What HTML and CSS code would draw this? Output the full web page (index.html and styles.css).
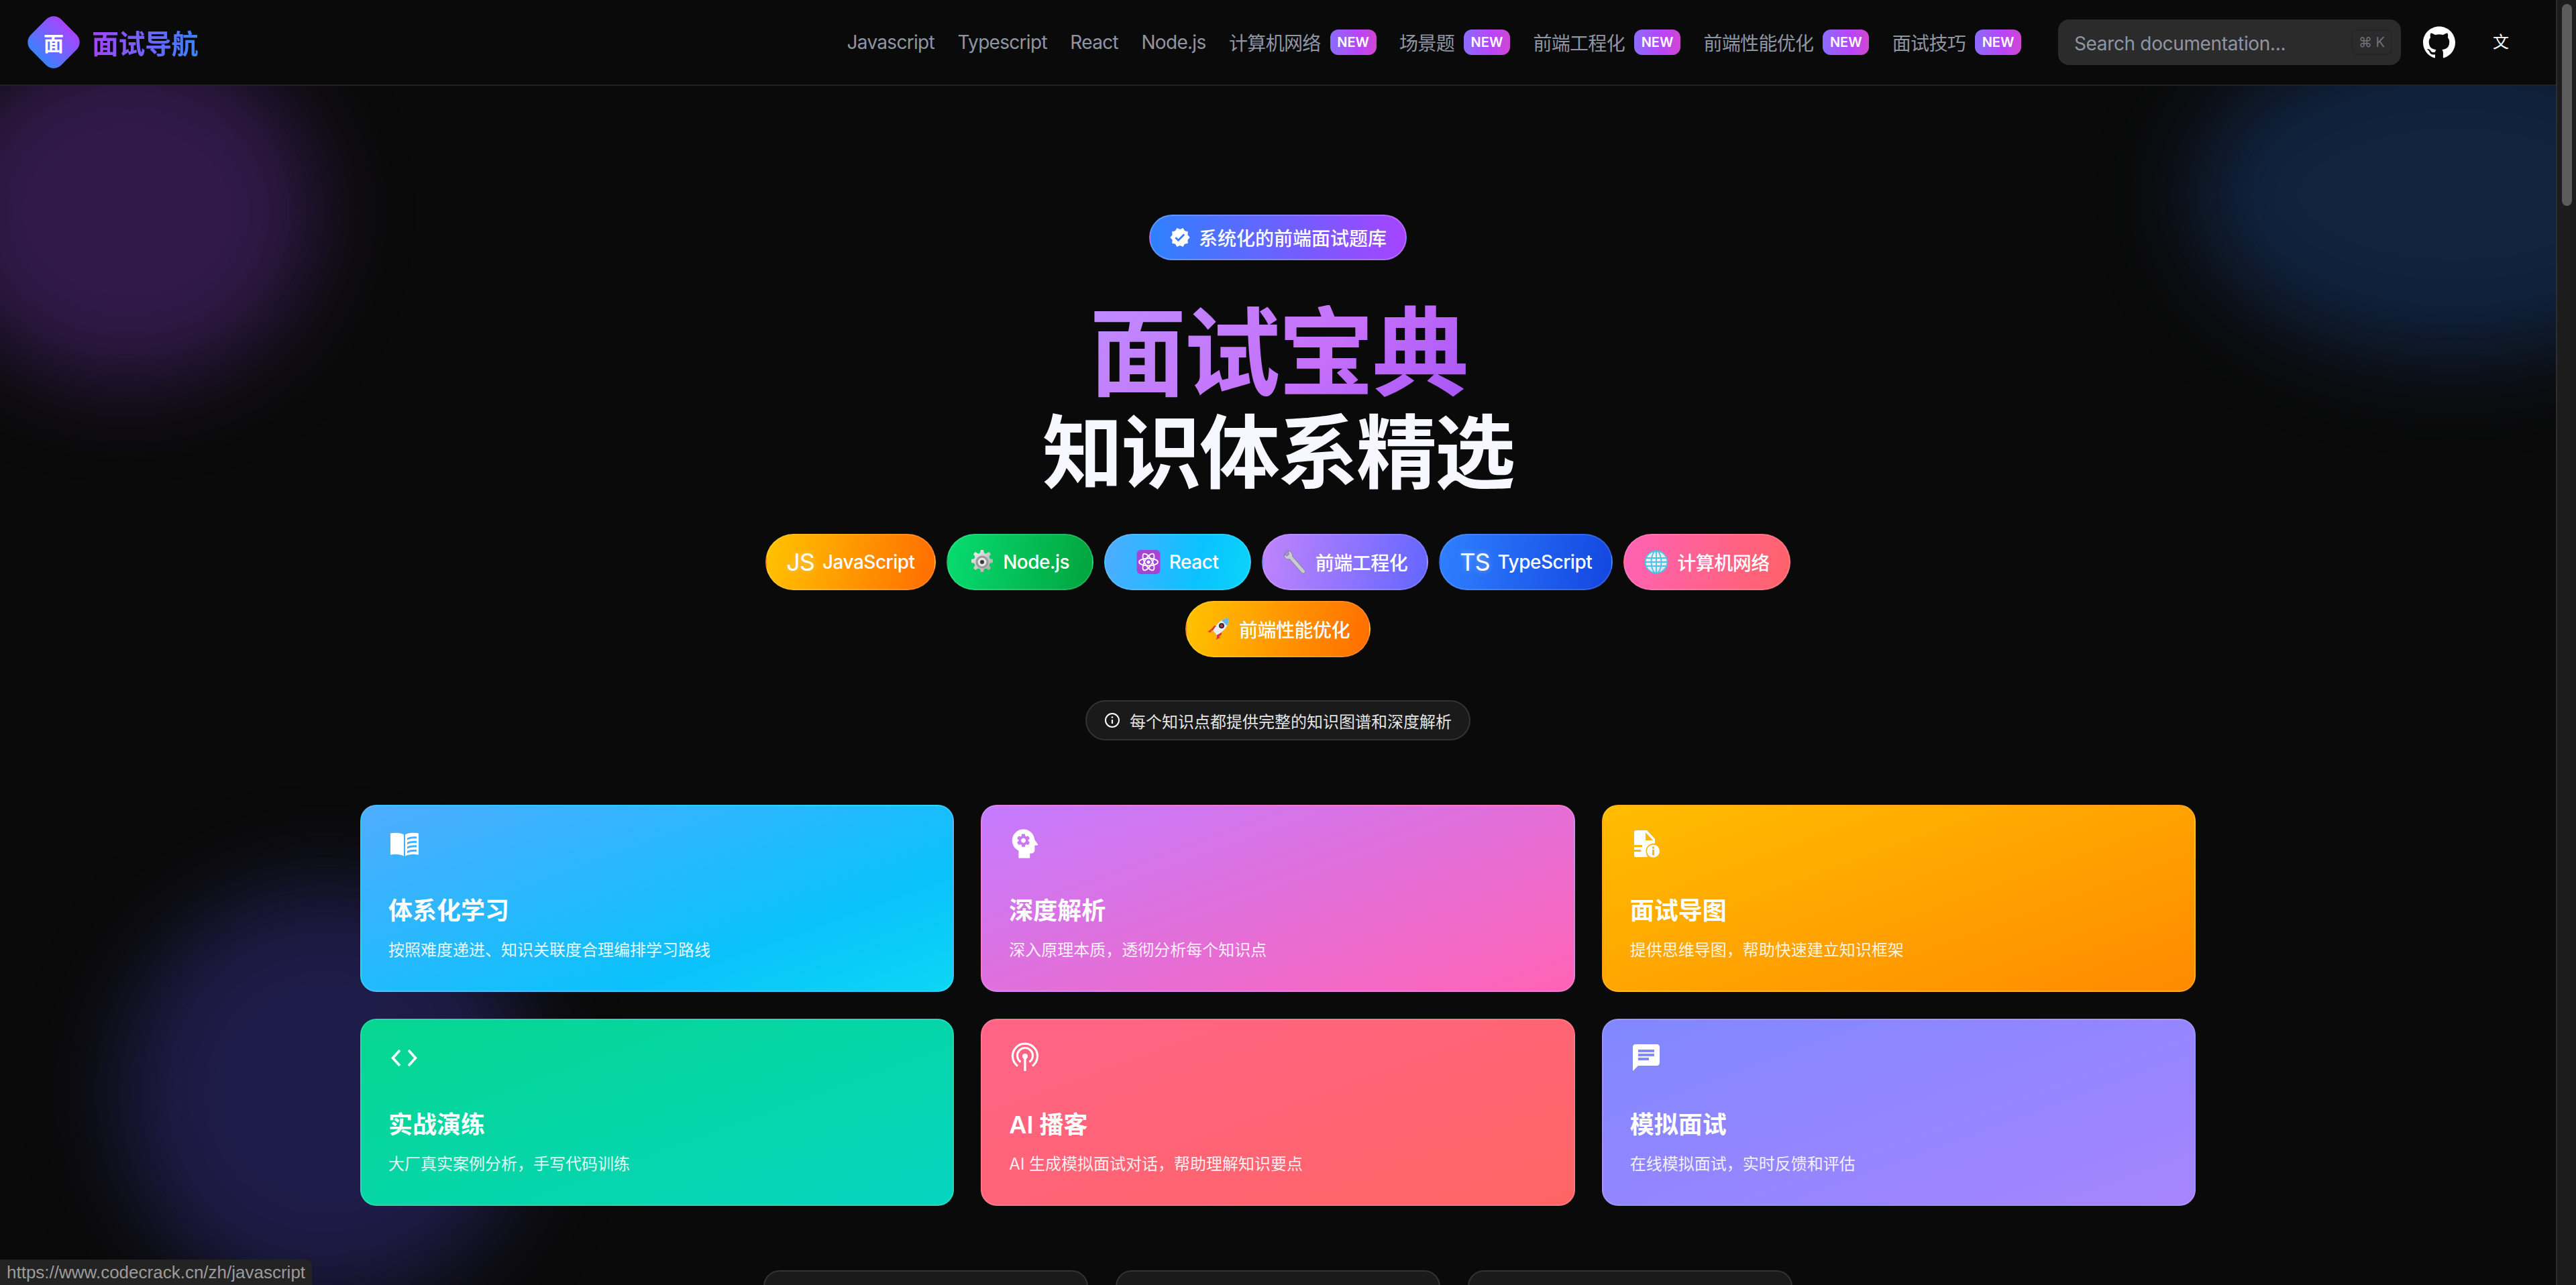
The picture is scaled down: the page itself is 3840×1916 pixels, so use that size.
FILE: index.html
```html
<!DOCTYPE html>
<html lang="zh">
<head>
<meta charset="utf-8">
<title>面试宝典</title>
<link rel="stylesheet" href="styles.css">
</head>
<body>
<div class="window">
  <div class="viewport">
    <div class="glow glow-purple"></div>
    <div class="glow glow-blue"></div>
    <div class="glow glow-indigo"></div>

    <header class="header">
      <a class="brand">
        <span class="brand-mark"><span class="brand-char">面</span></span>
        <span class="brand-name">面试导航</span>
      </a>
      <nav class="nav">
        <a class="nav-link">Javascript</a>
        <a class="nav-link">Typescript</a>
        <a class="nav-link">React</a>
        <a class="nav-link">Node.js</a>
        <a class="nav-link">计算机网络<span class="new">NEW</span></a>
        <a class="nav-link">场景题<span class="new">NEW</span></a>
        <a class="nav-link">前端工程化<span class="new">NEW</span></a>
        <a class="nav-link">前端性能优化<span class="new">NEW</span></a>
        <a class="nav-link">面试技巧<span class="new">NEW</span></a>
      </nav>
      <div class="search">
        <span class="search-text">Search documentation...</span>
        <kbd class="kbd">⌘ K</kbd>
      </div>
      <svg class="github" viewBox="0 0 24 24" fill="#fff"><path d="M12 .297c-6.63 0-12 5.373-12 12 0 5.303 3.438 9.8 8.205 11.385.6.113.82-.258.82-.577 0-.285-.01-1.04-.015-2.04-3.338.724-4.042-1.61-4.042-1.61C4.422 18.07 3.633 17.7 3.633 17.7c-1.087-.744.084-.729.084-.729 1.205.084 1.838 1.236 1.838 1.236 1.07 1.835 2.809 1.305 3.495.998.108-.776.417-1.305.76-1.605-2.665-.3-5.466-1.332-5.466-5.93 0-1.31.465-2.38 1.235-3.22-.135-.303-.54-1.523.105-3.176 0 0 1.005-.322 3.3 1.23.96-.267 1.98-.399 3-.405 1.02.006 2.04.138 3 .405 2.28-1.552 3.285-1.23 3.285-1.23.645 1.653.24 2.873.12 3.176.765.84 1.23 1.91 1.23 3.22 0 4.61-2.805 5.625-5.475 5.92.42.36.81 1.096.81 2.22 0 1.606-.015 2.896-.015 3.286 0 .315.21.69.825.57C20.565 22.092 24 17.592 24 12.297c0-6.627-5.373-12-12-12"/></svg>
      <span class="lang">文</span>
    </header>

    <main class="hero">
      <div class="badge">
        <svg class="badge-icon" viewBox="0 0 24 24" fill="#fff"><path d="M23 12l-2.44-2.79.34-3.69-3.61-.82-1.89-3.2L12 2.96 8.6 1.5 6.71 4.69 3.1 5.5l.34 3.7L1 12l2.44 2.79-.34 3.7 3.61.82L8.6 22.5l3.4-1.47 3.4 1.46 1.89-3.19 3.61-.82-.34-3.69L23 12zm-12.91 4.72l-3.8-3.81 1.48-1.48 2.32 2.33 5.85-5.87 1.48 1.48-7.33 7.35z"/></svg>
        <span>系统化的前端面试题库</span>
      </div>

      <h1 class="title">
        <span class="title-main">面试宝典</span>
        <span class="title-sub">知识体系精选</span>
      </h1>

      <div class="chips">
        <a class="chip chip-js"><span class="chip-mono">JS</span>JavaScript</a>
        <a class="chip chip-node">
          <svg class="chip-icon" viewBox="0 0 36 36"><defs><linearGradient id="gearG" x1="0" y1="0" x2="1" y2="1"><stop offset="0" stop-color="#f6f6f6"/><stop offset="1" stop-color="#a0a0a0"/></linearGradient></defs><path fill="url(#gearG)" d="M16 0h4l1 4.500 3 1 4-2.500 3 3-2.500 4 1 3 4.500 1v5l-4.500 1-1 3 2.500 4-3 3-4-2.500-3 1-1 4.500h-4l-1-4.500-3-1-4 2.500-3-3 2.500-4-1-3-4.500-1v-5l4.500-1 1-3-2.500-4 3-3 4 2.500 3-1z"/><circle cx="18" cy="18" r="9.500" fill="#9a9a9a"/><circle cx="18" cy="18" r="6.500" fill="#e4e4e4"/><circle cx="18" cy="18" r="3" fill="#3a3a3a"/></svg>
          Node.js</a>
        <a class="chip chip-react">
          <svg class="chip-icon" viewBox="0 0 36 36"><rect x="0.500" y="0" width="35" height="36" rx="6" fill="#a744d6"/><g fill="none" stroke="#fff" stroke-width="1.800"><ellipse cx="18" cy="18" rx="14" ry="5.500"/><ellipse cx="18" cy="18" rx="14" ry="5.500" transform="rotate(60 18 18)"/><ellipse cx="18" cy="18" rx="14" ry="5.500" transform="rotate(120 18 18)"/></g><circle cx="18" cy="18" r="2.600" fill="#fff"/></svg>
          React</a>
        <a class="chip chip-tool">
          <svg class="chip-icon" viewBox="0 0 36 36"><path fill="#c9ccd1" stroke="#80858c" stroke-width="1" d="M7 1.500c-2 1-4 2.500-4.500 4.500-.6 2.500.2 5 2 6.500 1.800 1.500 4 1.800 6 1.200l18 20.300c1 1.200 2.800 1.300 4 .2 1.200-1 1.300-2.800.3-4L14.500 9.500c.4-2.200-.3-4.400-2-6-1.200-1.100-2.800-1.900-4.500-2l1.500 5-3 2.500-4-2z"/></svg>
          前端工程化</a>
        <a class="chip chip-ts"><span class="chip-mono">TS</span>TypeScript</a>
        <a class="chip chip-net">
          <svg class="chip-icon" viewBox="0 0 36 36"><defs><radialGradient id="globeG" cx=".45" cy=".4" r=".65"><stop offset="0" stop-color="#f4f4f8"/><stop offset=".75" stop-color="#e6e6f0"/><stop offset="1" stop-color="#7fdcf0"/></radialGradient></defs><circle cx="18" cy="18" r="17" fill="url(#globeG)"/><g fill="none" stroke="#45c4e4" stroke-width="1.800"><circle cx="18" cy="18" r="16.500"/><ellipse cx="18" cy="18" rx="7.500" ry="16.500"/><path d="M18 1.500v33M2 12h32M2 24h32M1.500 18h33"/></g></svg>
          计算机网络</a>
        <a class="chip chip-perf">
          <svg class="chip-icon" viewBox="0 0 36 36"><path fill="#f03c24" d="M9 17L2 22l5 1zM18 28l-4 6 7-3z"/><path fill="#ffb300" d="M9 24l-5 11 11-6z"/><path fill="#e8eef4" d="M34 1C24 2 16 9 10 20l6 7c11-6 18-14 18-26z"/><path fill="#6bb8e8" d="M34 1c-5 .5-8 2-11 4l8 8c2-3 3-7 3-12z"/><circle cx="23" cy="13" r="4" fill="#2b2b33"/><circle cx="23" cy="13" r="2" fill="#d9383a"/><path fill="#d9383a" d="M10 20l-4 0 6-7 3 0zM16 27l0 5 7-6 0-3z"/></svg>
          前端性能优化</a>
      </div>

      <div class="note">
        <svg class="note-icon" viewBox="0 0 24 24" fill="none" stroke="#fff" stroke-width="2"><circle cx="12" cy="12" r="10"/><path d="M12 11v6" stroke-width="2.200"/><circle cx="12" cy="7.500" r="1.300" fill="#fff" stroke="none"/></svg>
        <span>每个知识点都提供完整的知识图谱和深度解析</span>
      </div>

      <section class="cards">
        <article class="card card-blue">
          <svg class="card-icon" viewBox="0 0 48 48" fill="#fff"><path d="M23 10.500C19 7.500 10 7 3 8.500v32c7-1.500 15-1 20 2zM25 10.500v32c5-3 13-3.500 20-2v-32c-7-1.500-16-1-20 2zM28 15.500c4-2 9-2.500 14-2v3c-5-.5-10 0-14 2zM28 22c4-2 9-2.500 14-2v3c-5-.5-10 0-14 2zM28 28.500c4-2 9-2.500 14-2v3c-5-.5-10 0-14 2zM28 35c4-2 9-2.500 14-2v3c-5-.5-10 0-14 2z" fill-rule="evenodd"/></svg>
          <h2 class="card-title">体系化学习</h2>
          <p class="card-desc">按照难度递进、知识关联度合理编排学习路线</p>
        </article>
        <article class="card card-pink">
          <svg class="card-icon" viewBox="2 2 20 20" fill="#fff"><g transform="matrix(-1 0 0 1 24 0)"><path d="M13 8.570c-.79 0-1.430.64-1.430 1.430s.64 1.430 1.430 1.430 1.430-.64 1.430-1.430-.64-1.430-1.430-1.430z"/><path d="M13 3C9.250 3 6.200 5.940 6.020 9.640L4.100 12.200c-.25.33-.01.8.4.8H6v3c0 1.100.9 2 2 2h1v3h7v-4.680c2.360-1.120 4-3.530 4-6.320 0-3.870-3.130-7-7-7zm3 7c0 .13-.01.26-.03.38l.83.66c.08.06.1.16.05.25l-.8 1.390c-.05.09-.16.12-.24.09l-.99-.4c-.21.16-.43.29-.67.39L14 13.830c-.01.1-.1.17-.2.17h-1.600c-.1 0-.18-.07-.2-.17l-.15-1.060c-.25-.1-.47-.23-.68-.39l-.99.4c-.09.03-.2 0-.25-.09l-.8-1.390c-.05-.08-.03-.19.05-.25l.84-.66c-.01-.13-.02-.26-.02-.39s.02-.27.04-.39l-.85-.66c-.08-.06-.1-.16-.05-.26l.8-1.380c.05-.09.15-.12.24-.09l1 .4c.2-.15.43-.29.67-.39L12 6.170c.02-.1.1-.17.2-.17h1.600c.1 0 .18.07.2.17l.15 1.060c.24.1.46.23.67.39l1-.4c.09-.03.2 0 .24.09l.8 1.380c.05.09.03.2-.05.26l-.85.66c.03.12.04.25.04.39z"/></g></svg>
          <h2 class="card-title">深度解析</h2>
          <p class="card-desc">深入原理本质，透彻分析每个知识点</p>
        </article>
        <article class="card card-orange">
          <svg class="card-icon" viewBox="0 0 48 48" fill="#fff"><path d="M9 4h16l12 13v6.500c-7-.5-13 4-13.500 11 0 3.500 1 6.500 3 9.500H9c-1.700 0-3-1.300-3-3V7c0-1.700 1.300-3 3-3zm14 3v12h11zM6 26h12v3H6zM6 33h10v3H6z" fill-rule="evenodd"/><path d="M34.500 25.500a9.500 9.500 0 1 0 0 19 9.500 9.500 0 0 0 0-19zM33 33h3v8h-3zm0-4.500h3v3h-3z" fill-rule="evenodd"/></svg>
          <h2 class="card-title">面试导图</h2>
          <p class="card-desc">提供思维导图，帮助快速建立知识框架</p>
        </article>
        <article class="card card-green">
          <svg class="card-icon" viewBox="0 0 48 48" fill="none" stroke="#fff" stroke-width="3.600"><path d="M17 13L6.500 24.500 17 36M30 13l10.500 11.500L30 36"/></svg>
          <h2 class="card-title">实战演练</h2>
          <p class="card-desc">大厂真实案例分析，手写代码训练</p>
        </article>
        <article class="card card-red">
          <svg class="card-icon" viewBox="0 0 48 48" fill="none" stroke="#fff" stroke-width="3.200"><path d="M13 36.500A18.500 18.500 0 1 1 35 36.500"/><path d="M17.500 30.500A11.500 11.500 0 1 1 30.500 30.500"/><path d="M24 24v20" stroke-width="3.400"/><circle cx="24" cy="22" r="4" fill="#fff" stroke="none"/></svg>
          <h2 class="card-title">AI 播客</h2>
          <p class="card-desc">AI 生成模拟面试对话，帮助理解知识要点</p>
        </article>
        <article class="card card-violet">
          <svg class="card-icon" viewBox="0 0 24 24" fill="#fff"><path d="M20 2H4c-1.100 0-1.990.9-1.990 2L2 22l4-4h14c1.100 0 2-.9 2-2V4c0-1.100-.9-2-2-2zM6 9h12v2H6V9zm8 5H6v-2h8v2zm4-6H6V6h12v2z"/></svg>
          <h2 class="card-title">模拟面试</h2>
          <p class="card-desc">在线模拟面试，实时反馈和评估</p>
        </article>
      </section>

      <section class="stats">
        <div class="stat"></div>
        <div class="stat"></div>
        <div class="stat"></div>
      </section>
    </main>

    <div class="status">https://www.codecrack.cn/zh/javascript</div>
  </div>
  <aside class="scrollbar"><div class="scroll-thumb"></div></aside>
</div>
</body>
</html>
```

FILE: styles.css
```css
* { box-sizing: border-box; }

html, body {
  margin: 0;
  height: 100%;
  overflow: hidden;
  background: #0a0a0a;
}

body {
  font-family: Inter, "Noto Sans CJK SC", sans-serif;
  color: #fff;
}

.window {
  display: flex;
  height: 1916px;
}

.viewport {
  position: relative;
  flex: 1;
  min-width: 0;
  overflow: hidden;
  background: #0a0a0a;
}

/* ambient glows */
.glow {
  position: absolute;
  border-radius: 50%;
  filter: blur(64px);
}

.glow-purple {
  left: -90px;
  top: 60px;
  width: 560px;
  height: 510px;
  background: #311a4a;
}

.glow-blue {
  left: 3270px;
  top: 50px;
  width: 780px;
  height: 480px;
  background: #10233f;
}

.glow-indigo {
  left: 180px;
  top: 1320px;
  width: 610px;
  height: 620px;
  background: #1e1c48;
}

/* header */
.header {
  position: relative;
  z-index: 2;
  display: flex;
  align-items: center;
  height: 128px;
  padding-left: 42px;
  background: #0a0a0a;
  border-bottom: 2px solid #232323;
}

.brand {
  display: flex;
  align-items: center;
  gap: 19px;
}

.brand-mark {
  position: relative;
  display: flex;
  align-items: center;
  justify-content: center;
  width: 76px;
  height: 76px;
}

.brand-mark::before {
  content: "";
  position: absolute;
  inset: 6px;
  border-radius: 16px;
  transform: rotate(45deg);
  background: linear-gradient(180deg, #a844ff, #3b82ff);
}

.brand-char {
  position: relative;
  font-size: 30px;
  font-weight: 700;
}

.brand-name {
  font-size: 40px;
  font-weight: 700;
  letter-spacing: -0.5px;
  background: linear-gradient(90deg, #a444ff, #3b82ff);
  -webkit-background-clip: text;
  background-clip: text;
  color: transparent;
}

.nav {
  display: flex;
  align-items: center;
  gap: 34.5px;
  margin-left: auto;
}

.nav-link {
  display: flex;
  align-items: center;
  gap: 14px;
  font-size: 28px;
  letter-spacing: -0.7px;
  color: #8f96a3;
  white-space: nowrap;
}

.new {
  display: flex;
  align-items: center;
  justify-content: center;
  width: 69px;
  height: 38px;
  border-radius: 12px;
  font-size: 20px;
  font-weight: 600;
  letter-spacing: 0;
  color: #fff;
  background: linear-gradient(90deg, #8b6cff, #b845fb 60%, #d046d0);
}

.search {
  display: flex;
  align-items: center;
  justify-content: space-between;
  width: 511px;
  height: 68px;
  margin-left: 55px;
  padding: 0 13px 0 24px;
  border-radius: 16px;
  background: #2b2b2b;
}

.search-text {
  padding-top: 3px;
  font-size: 28px;
  letter-spacing: -0.35px;
  color: #8f96a3;
}

.kbd {
  display: flex;
  align-items: center;
  justify-content: center;
  width: 61px;
  height: 38px;
  border: 2px solid #262626;
  border-radius: 8px;
  font-family: Inter, sans-serif;
  font-size: 20px;
  color: #6b7280;
}

.github {
  width: 48px;
  height: 48px;
  margin-left: 33px;
  flex: none;
}

.lang {
  margin-left: 56px;
  margin-right: 70px;
  font-size: 24px;
  line-height: 1;
  color: #fff;
}

/* hero */
.hero {
  position: relative;
  z-index: 1;
  display: flex;
  flex-direction: column;
  align-items: center;
  padding-top: 192px;
}

.badge {
  display: flex;
  align-items: center;
  gap: 12px;
  height: 68px;
  padding: 0 28px;
  border: 2px solid rgba(255, 255, 255, 0.2);
  border-radius: 34px;
  font-size: 28px;
  font-weight: 500;
  background: linear-gradient(90deg, #2f80ff, #a544ff);
}

.badge-icon {
  width: 32px;
  height: 32px;
}

.title {
  display: flex;
  flex-direction: column;
  align-items: center;
  margin: 67px 0 0;
  font-weight: 700;
}

.title-main {
  font-size: 144px;
  line-height: 144px;
  letter-spacing: -3.6px;
  background: linear-gradient(135deg, #bf8bff, #c670fb 60%, #a855f7);
  -webkit-background-clip: text;
  background-clip: text;
  color: transparent;
}

.title-sub {
  margin-top: 17px;
  font-size: 120px;
  line-height: 120px;
  letter-spacing: -3px;
  color: #f6f7ff;
}

.chips {
  display: flex;
  flex-wrap: wrap;
  justify-content: center;
  gap: 16px;
  width: 1600px;
  margin-top: 60px;
}

.chip {
  display: flex;
  align-items: center;
  justify-content: center;
  gap: 13px;
  min-width: 219px;
  height: 84px;
  padding: 0 29px;
  border: 2px solid rgba(255, 255, 255, 0.12);
  border-radius: 42px;
  font-size: 28px;
  font-weight: 500;
  letter-spacing: -0.5px;
  color: #fff;
}

.chip-mono {
  margin-right: -1px;
  font-size: 36px;
  font-weight: 400;
  letter-spacing: -1px;
  text-shadow: 0 0 8px rgba(255, 255, 255, 0.4);
}

.chip-icon {
  width: 36px;
  height: 36px;
  flex: none;
}

.chip-js, .chip-perf { background: linear-gradient(100deg, #ffc300, #ff6d00); }
.chip-node { background: linear-gradient(100deg, #06dc70, #03a33e); }
.chip-react { background: linear-gradient(100deg, #4facfe, #0ac2ff 65%, #0ad4fa); }
.chip-tool { background: linear-gradient(100deg, #c084fc, #6366ff); }
.chip-ts { background: linear-gradient(100deg, #2f80ff, #1346e0); }
.chip-net { background: linear-gradient(100deg, #ff62b4, #ff6268); }

.note {
  display: flex;
  align-items: center;
  gap: 14px;
  height: 60px;
  margin-top: 64px;
  padding: 0 26px;
  border: 2px solid #333;
  border-radius: 30px;
  font-size: 24px;
  color: #e4e4e4;
  background: #1a1a1a;
}

.note-icon {
  width: 24px;
  height: 24px;
}

/* feature cards */
.cards {
  display: grid;
  grid-template-columns: repeat(3, 1fr);
  gap: 40px;
  width: 2736px;
  margin-top: 96px;
}

.card {
  height: 279px;
  padding: 32px 40px;
  border: 2px solid rgba(255, 255, 255, 0.12);
  border-radius: 24px;
}

.card-icon {
  display: block;
  width: 48px;
  height: 48px;
}

.card-title {
  margin: 48px 0 0;
  font-size: 36px;
  line-height: 56px;
  font-weight: 600;
}

.card-desc {
  margin: 13px 0 0;
  font-size: 24px;
  line-height: 36px;
  color: rgba(255, 255, 255, 0.9);
}

.card-blue { background: linear-gradient(160deg, #4facfe, #0ac2fb 70%, #0cd6f5); }
.card-pink { background: linear-gradient(160deg, #c47bff, #ff63b4); }
.card-orange { background: linear-gradient(160deg, #ffbd00, #ff8a00); }
.card-green { background: linear-gradient(160deg, #06d68f, #06d4c0); }
.card-red { background: linear-gradient(160deg, #ff6488, #ff6464); }
.card-violet { background: linear-gradient(160deg, #8088ff, #a684ff); }

/* lower stat cards, cut off by the viewport */
.stats {
  display: flex;
  justify-content: center;
  gap: 41px;
  margin-top: 96px;
}

.stat {
  width: 484px;
  height: 200px;
  border: 2px solid #333;
  border-radius: 24px;
  background: #1a1a1a;
}

/* browser chrome overlays */
.status {
  position: absolute;
  z-index: 3;
  left: 0;
  bottom: 0;
  display: flex;
  align-items: center;
  height: 38px;
  padding: 0 10px;
  border-top-right-radius: 8px;
  font-family: "Liberation Sans", sans-serif;
  font-size: 26px;
  color: #9c9c9c;
  background: #232323;
}

.scrollbar {
  flex: none;
  width: 30px;
  padding: 6px 6px 0 7px;
  border-left: 2px solid #2e2e2e;
  background: #1c1c1c;
}

.scroll-thumb {
  height: 301px;
  border-radius: 9px;
  background: #5c5c5c;
}
```
